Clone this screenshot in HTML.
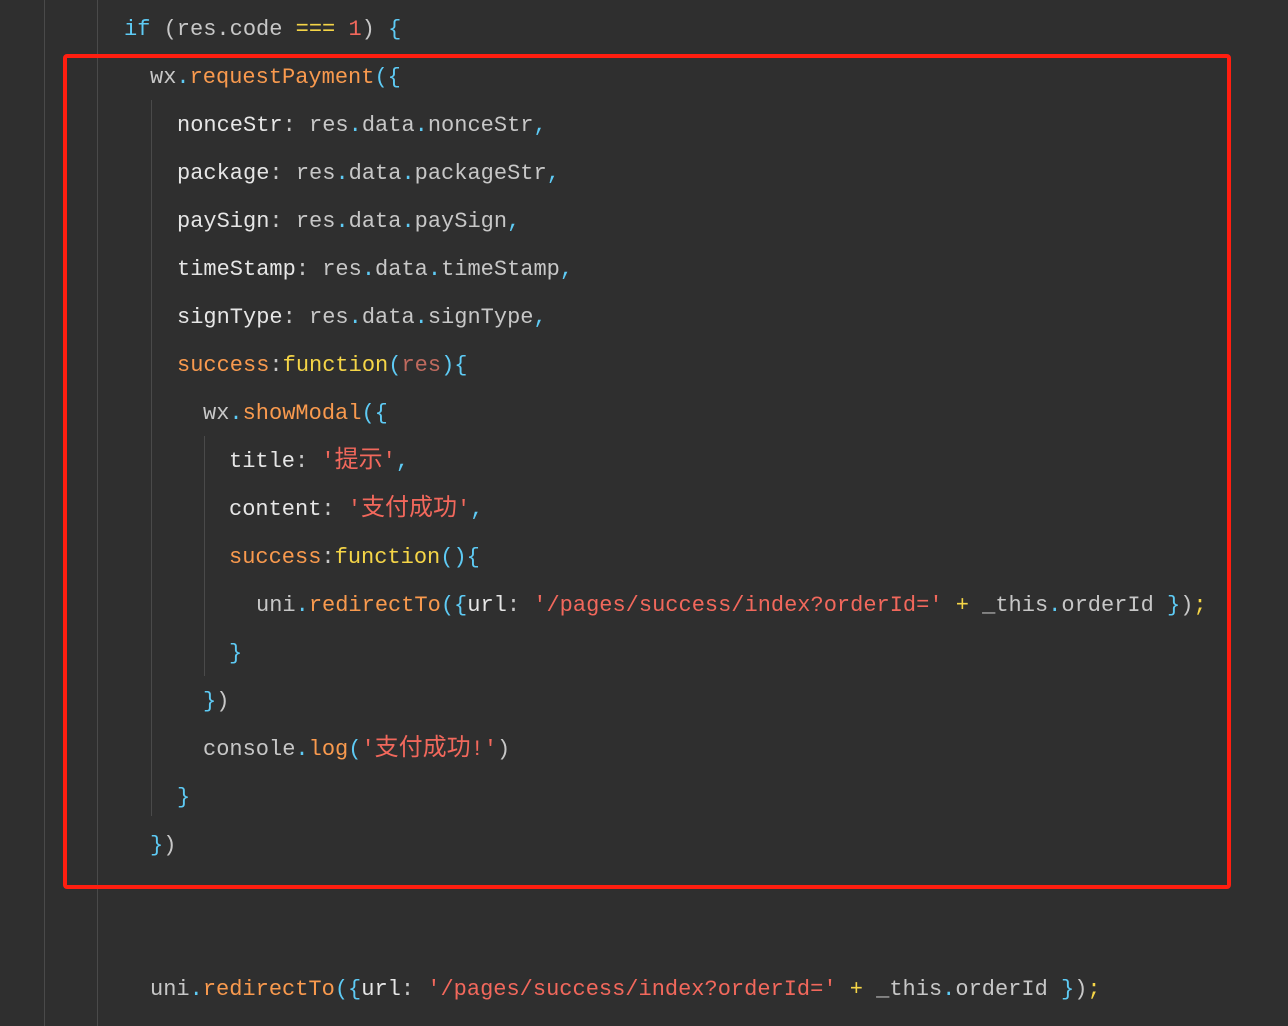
<!DOCTYPE html>
<html><head><meta charset="utf-8"><style>
html,body{margin:0;padding:0;background:#2f2f2f;}
body{width:1288px;height:1026px;position:relative;overflow:hidden;font-family:"Liberation Mono","Noto Sans CJK SC",monospace;font-size:22px;color:#c9c9c9;}
.g{position:absolute;width:1px;background:#4a4a4a;}
.l{position:absolute;white-space:pre;line-height:48px;height:48px;margin-top:2px;}
.k{color:#5ecbf5}.f{color:#f99a4e}.y{color:#f5d547}.s{color:#f2685c}.n{color:#f2685c}.w{color:#e6e6e6}.p{color:#c7c7c7}.r{color:#c06a5e}
.box{position:absolute;left:63px;top:54px;width:1160px;height:827px;border:4px solid #ff1e10;border-radius:4px;}
.cj{font-family:"Noto Sans CJK SC",sans-serif;font-size:24px;line-height:0;}
</style></head><body>
<div class="g" style="left:44px;top:0;height:1026px"></div>
<div class="g" style="left:97px;top:0;height:1026px"></div>
<div class="g" style="left:151px;top:100px;height:716px"></div>
<div class="g" style="left:204px;top:436px;height:240px"></div>

<div class="l" style="left:124px;top:4px"><span class="k">if</span> <span class="p">(res.code</span> <span class="y">===</span> <span class="n">1</span><span class="p">)</span> <span class="k">{</span></div>
<div class="l" style="left:150px;top:52px"><span class="p">wx</span><span class="k">.</span><span class="f">requestPayment</span><span class="k">({</span></div>
<div class="l" style="left:177px;top:100px"><span class="w">nonceStr</span><span class="p">: res</span><span class="k">.</span><span class="p">data</span><span class="k">.</span><span class="p">nonceStr</span><span class="k">,</span></div>
<div class="l" style="left:177px;top:148px"><span class="w">package</span><span class="p">: res</span><span class="k">.</span><span class="p">data</span><span class="k">.</span><span class="p">packageStr</span><span class="k">,</span></div>
<div class="l" style="left:177px;top:196px"><span class="w">paySign</span><span class="p">: res</span><span class="k">.</span><span class="p">data</span><span class="k">.</span><span class="p">paySign</span><span class="k">,</span></div>
<div class="l" style="left:177px;top:244px"><span class="w">timeStamp</span><span class="p">: res</span><span class="k">.</span><span class="p">data</span><span class="k">.</span><span class="p">timeStamp</span><span class="k">,</span></div>
<div class="l" style="left:177px;top:292px"><span class="w">signType</span><span class="p">: res</span><span class="k">.</span><span class="p">data</span><span class="k">.</span><span class="p">signType</span><span class="k">,</span></div>
<div class="l" style="left:177px;top:340px"><span class="f">success</span><span class="p">:</span><span class="y">function</span><span class="k">(</span><span class="r">res</span><span class="k">){</span></div>
<div class="l" style="left:203px;top:388px"><span class="p">wx</span><span class="k">.</span><span class="f">showModal</span><span class="k">({</span></div>
<div class="l" style="left:229px;top:436px"><span class="w">title</span><span class="p">: </span><span class="s">'<span class="cj">提示</span>'</span><span class="k">,</span></div>
<div class="l" style="left:229px;top:484px"><span class="w">content</span><span class="p">: </span><span class="s">'<span class="cj">支付成功</span>'</span><span class="k">,</span></div>
<div class="l" style="left:229px;top:532px"><span class="f">success</span><span class="p">:</span><span class="y">function</span><span class="k">(){</span></div>
<div class="l" style="left:256px;top:580px"><span class="p">uni</span><span class="k">.</span><span class="f">redirectTo</span><span class="k">({</span><span class="w">url</span><span class="p">: </span><span class="s">'/pages/success/index?orderId='</span> <span class="y">+</span> <span class="p">_this</span><span class="k">.</span><span class="p">orderId</span> <span class="k">}</span><span class="p">)</span><span class="y">;</span></div>
<div class="l" style="left:229px;top:628px"><span class="k">}</span></div>
<div class="l" style="left:203px;top:676px"><span class="k">}</span><span class="p">)</span></div>
<div class="l" style="left:203px;top:724px"><span class="p">console</span><span class="k">.</span><span class="f">log</span><span class="k">(</span><span class="s">'<span class="cj">支付成功</span>!'</span><span class="p">)</span></div>
<div class="l" style="left:177px;top:772px"><span class="k">}</span></div>
<div class="l" style="left:150px;top:820px"><span class="k">}</span><span class="p">)</span></div>
<div class="l" style="left:150px;top:964px"><span class="p">uni</span><span class="k">.</span><span class="f">redirectTo</span><span class="k">({</span><span class="w">url</span><span class="p">: </span><span class="s">'/pages/success/index?orderId='</span> <span class="y">+</span> <span class="p">_this</span><span class="k">.</span><span class="p">orderId</span> <span class="k">}</span><span class="p">)</span><span class="y">;</span></div>
<div class="box"></div>
</body></html>
